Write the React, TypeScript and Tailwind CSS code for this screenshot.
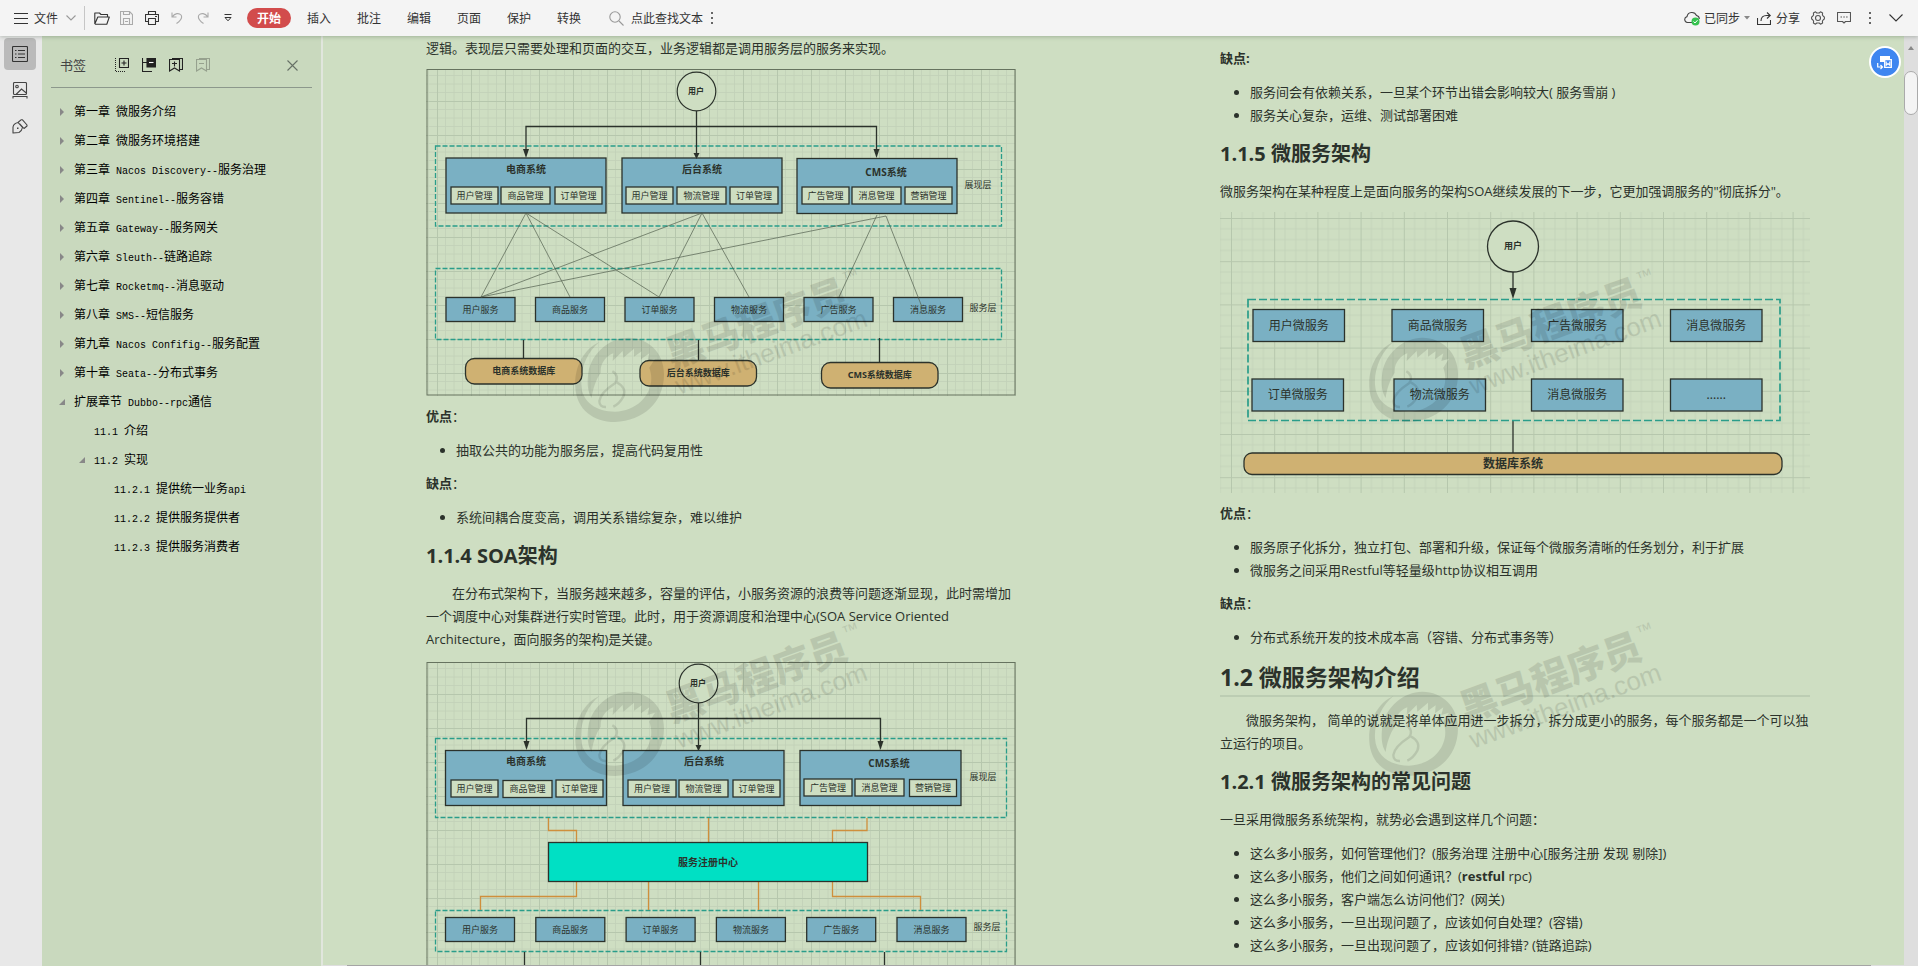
import React, { useState } from "react";
import clsx from "clsx";

const INK = "#2b322b";
const BLUE = "#7ab0c3";
const PAPER = "#cedec2";
const TAN = "#cfb172";
const TEAL = "#2a9d8a";
const ORANGE = "#cf8f3c";

const tabs = ["开始", "插入", "批注", "编辑", "页面", "保护", "转换"];

type Bookmark = { title: string; level: number; state?: "open" | "closed" };

const bookmarks: Bookmark[] = [
  { title: "第一章 微服务介绍", level: 0, state: "closed" },
  { title: "第二章 微服务环境搭建", level: 0, state: "closed" },
  { title: "第三章 Nacos Discovery--服务治理", level: 0, state: "closed" },
  { title: "第四章 Sentinel--服务容错", level: 0, state: "closed" },
  { title: "第五章 Gateway--服务网关", level: 0, state: "closed" },
  { title: "第六章 Sleuth--链路追踪", level: 0, state: "closed" },
  { title: "第七章 Rocketmq--消息驱动", level: 0, state: "closed" },
  { title: "第八章 SMS--短信服务", level: 0, state: "closed" },
  { title: "第九章 Nacos Confifig--服务配置", level: 0, state: "closed" },
  { title: "第十章 Seata--分布式事务", level: 0, state: "closed" },
  { title: "扩展章节 Dubbo--rpc通信", level: 0, state: "open" },
  { title: "11.1 介绍", level: 1 },
  { title: "11.2 实现", level: 1, state: "open" },
  { title: "11.2.1 提供统一业务api", level: 2 },
  { title: "11.2.2 提供服务提供者", level: 2 },
  { title: "11.2.3 提供服务消费者", level: 2 },
];

const indent = ["pl-[17px]", "pl-[37px]", "pl-[57px]"];

/* ---------- small icons ---------- */

function Icon({ w, h, children, className }: { w: number; h: number; children: React.ReactNode; className?: string }) {
  return (
    <svg
      width={w}
      height={h}
      viewBox={`0 0 ${w} ${h}`}
      fill="none"
      stroke="currentColor"
      strokeWidth="1.1"
      className={clsx("shrink-0", className)}
      aria-hidden="true"
    >
      {children}
    </svg>
  );
}

function IconButton({ label, className, children }: { label: string; className?: string; children: React.ReactNode }) {
  return (
    <button type="button" aria-label={label} className={clsx("flex shrink-0 items-center justify-center", className)}>
      {children}
    </button>
  );
}

/* ---------- toolbar ---------- */

function Toolbar() {
  const [active, setActive] = useState("开始");

  return (
    <header className="relative z-20 flex h-9 shrink-0 items-center bg-[#f4f4f4] pl-[14px] pr-[15px] text-xs text-[#333] shadow-[0_1px_4px_rgba(60,80,60,0.3)]">
      <button type="button" className="flex items-center gap-[6px]">
        <Icon w={14} h={11}>
          <path d="M0 .5H14M0 5.5H14M0 10.5H14" />
        </Icon>
        文件
        <Icon w={10} h={6} className="ml-[2px] text-[#999]">
          <path d="M.5 .5L5 5L9.500 .5" />
        </Icon>
      </button>
      <div className="ml-2 h-6 w-px bg-[#c6c6c6]" />

      {/* quick access */}
      <div className="ml-[9px] flex items-center">
        <IconButton label="打开">
          <Icon w={16} h={13}>
            <path d="M.8 12V1H5.500L7 2.500H13.500V5M.8 12L3.800 5H15.300L12.800 12.300H.8" strokeLinejoin="round" />
          </Icon>
        </IconButton>
        <IconButton label="保存" className="ml-[10px] text-[#aaa]">
          <Icon w={13} h={14}>
            <path d="M.5 .5H9.500L12.500 3.500V13.500H.5ZM3.500 .5V3.500H9.500V.5M3.500 13.500V7.500H9.500V13.500M5 10.500H8" />
          </Icon>
        </IconButton>
        <IconButton label="打印" className="ml-3">
          <Icon w={14} h={14}>
            <path d="M3.500 3.500V.5H10.500V3.500M3.500 10.500H.5V3.500H13.500V10.500H10.500M3.500 7.500H10.500V13.500H3.500ZM10 5.500H12" strokeLinejoin="round" />
          </Icon>
        </IconButton>
        <IconButton label="撤销" className="ml-3 text-[#aaa]">
          <Icon w={12} h={12}>
            <path d="M1 .5V5H5.500M1.200 4.800C4 1 8 .8 10 3C12 6 9 9 5.500 11.500" />
          </Icon>
        </IconButton>
        <IconButton label="重做" className="ml-[14px] text-[#aaa]">
          <Icon w={12} h={12}>
            <path d="M11 .5V5H6.500M10.800 4.800C8 1 4 .8 2 3C0 6 3 9 6.500 11.500" />
          </Icon>
        </IconButton>
        <IconButton label="更多" className="ml-[15px]">
          <Icon w={8} h={8}>
            <path d="M.5 .5H7.500M1 3.500H7L4 6.800Z" strokeWidth="1" />
          </Icon>
        </IconButton>
      </div>

      <nav className="ml-[15px] flex items-center gap-[6px]">
        {tabs.map((tab) => (
          <button
            key={tab}
            type="button"
            onClick={() => setActive(tab)}
            className={clsx("h-5 w-11 rounded-full", active === tab && "bg-[#d24c4c] font-bold text-white")}
          >
            {tab}
          </button>
        ))}
      </nav>

      <label className="ml-[18px] flex items-center gap-[7px]">
        <Icon w={15} h={15} className="text-[#999]">
          <circle cx="6" cy="6" r="5.200" />
          <path d="M10 10L14.500 14.500" />
        </Icon>
        <input
          type="text"
          aria-label="查找文本"
          placeholder="点此查找文本"
          className="w-19 bg-transparent outline-none placeholder:text-[#333] placeholder:opacity-100"
        />
      </label>
      <IconButton label="更多选项" className="ml-[3px]">
        <Dots />
      </IconButton>

      <div className="ml-auto flex items-center">
        <button type="button" className="flex items-center gap-1">
          <svg width="16" height="15" viewBox="0 0 16 15" fill="none" aria-hidden="true">
            <path
              d="M8 11.500H3.500A3 3 0 0 1 3 5.600A5 5 0 0 1 12.500 4.500A3.500 3.500 0 0 1 15.300 8"
              stroke="#444"
              strokeWidth="1.100"
            />
            <circle cx="11.500" cy="10.500" r="4" fill="#35c24f" />
            <path d="M9.500 10.500L11 12L13.500 9.200" stroke="#fff" />
          </svg>
          已同步
        </button>
        <Icon w={6} h={4} className="ml-1">
          <path d="M0 0H6L3 3.500Z" fill="#888" stroke="none" />
        </Icon>
        <button type="button" className="ml-[7px] flex items-center gap-[5px]">
          <Icon w={14} h={13}>
            <path d="M.5 6V12.500H13.500V8M4 9C4 5.500 6 3.500 9.500 3.500H13M10 .5L13.200 3.500L10 6.500" />
          </Icon>
          分享
        </button>
        <IconButton label="设置" className="ml-[11px] text-[#555]">
          <Icon w={14} h={14}>
            <path
              d="M4.500 .8L5.800 2H8.200L9.500 .8L11.600 2L11.400 3.900L12.500 5.500L13.400 6V8L12.500 8.500L11.400 10.100L11.600 12L9.500 13.200L8.200 12H5.800L4.500 13.200L2.400 12L2.600 10.100L1.500 8.500L.6 8V6L1.500 5.500L2.600 3.900L2.400 2Z"
              strokeLinejoin="round"
            />
            <circle cx="7" cy="7" r="2.500" />
          </Icon>
        </IconButton>
        <IconButton label="消息" className="ml-3 text-[#555]">
          <Icon w={14} h={12}>
            <path d="M.5 .5H13.500V9.500H8.500L7 11L5.500 9.500H.5Z" strokeLinejoin="round" />
            <path d="M3.500 5H5M6.300 5H7.800M9.100 5H10.600" />
          </Icon>
        </IconButton>
        <IconButton label="菜单" className="ml-[17px]">
          <Dots />
        </IconButton>
        <IconButton label="收起" className="ml-[17px]">
          <Icon w={14} h={8}>
            <path d="M.5 .5L7 7L13.500 .5" />
          </Icon>
        </IconButton>
      </div>
    </header>
  );
}

function Dots() {
  return (
    <Icon w={4} h={12}>
      <path d="M1 0H3V2H1ZM1 5H3V7H1ZM1 10H3V12H1Z" fill="#666" stroke="none" />
    </Icon>
  );
}

/* ---------- left side ---------- */

function Rail() {
  return (
    <div className="flex w-[42px] shrink-0 flex-col gap-1 bg-[#e8e8e8] pl-1 pt-[2px] text-[#444]">
      <IconButton label="书签" className="size-8 rounded-sm bg-[#bababa] text-[#333]">
        <Icon w={16} h={16}>
          <rect x=".5" y=".5" width="15" height="15" rx="1" />
          <path d="M3 4.500H4.500M6 4.500H13M3 8H4.500M6 8H13M3 11.500H4.500M6 11.500H13" />
        </Icon>
      </IconButton>
      <IconButton label="缩略图" className="size-8">
        <Icon w={16} h={17}>
          <rect x="1.500" y=".5" width="13" height="12" rx="1" />
          <circle cx="5" cy="4.500" r="1.300" />
          <path d="M4 12.500L9.500 7L14.300 11M1 16.500V14.500H15V16.500" />
        </Icon>
      </IconButton>
      <IconButton label="签名" className="size-8">
        <Icon w={16} h={15}>
          <path
            d="M1 14V8C1.500 5.500 3.500 4 6 3.500L10.500 8.500C10 11 9 12.500 7 13.500ZM6 3.500L9 .8H10.500L15 6V7L12 9.500L7.500 4.500"
            strokeLinejoin="round"
          />
          <path d="M5 8.500H6.500V10H5Z" fill="currentColor" stroke="none" />
        </Icon>
      </IconButton>
    </div>
  );
}

// Latin runs keep a half-width cell next to the full-width characters
function BookmarkTitle({ text }: { text: string }) {
  return (
    <>
      {text.split(/([\x20-\x7e]+)/).map((part, i) =>
        i % 2 === 1 ? (
          <span key={i} className="font-['Liberation_Mono',monospace] text-[10px]">
            {part}
          </span>
        ) : (
          part
        )
      )}
    </>
  );
}

function Bookmarks() {
  return (
    <aside className="w-[281px] shrink-0 border-r-2 border-[#e1e6dd] bg-[#c9d9be] pl-[9px] pr-[9px]">
      <div className="flex h-[52px] items-center border-b border-[#8c988c] pl-[9px] pr-[14px] pt-[7px]">
        <h2 className="text-[13px] text-[#444]">书签</h2>
        <div className="ml-[29px] flex gap-[13px] text-[#222]">
          <IconButton label="展开全部">
            <Icon w={14} h={14}>
              <path d="M.5 0V14M1 13.500H10" strokeDasharray="1 1" strokeWidth="1" />
              <path d="M4.500 .5H13.500V9.500H4.500ZM9 2.500V7.500M6.500 5H11.500" />
            </Icon>
          </IconButton>
          <IconButton label="收起全部">
            <Icon w={14} h={14}>
              <path d="M.5 0V13.500H10M.5 4.500H5" />
              <path d="M5 .5H13.500V9H5Z" fill="currentColor" />
              <path d="M7 4.500H11.500" stroke="#fff" />
            </Icon>
          </IconButton>
          <IconButton label="添加书签">
            <Icon w={14} h={14}>
              <path d="M.5 1.500H10.500V13L5.500 10L.5 13ZM3 .5H13.500V11.500H10.500M5.500 3.500V8.500M3 5.500H8" />
            </Icon>
          </IconButton>
          <IconButton label="删除书签" className="opacity-30">
            <Icon w={14} h={14}>
              <path d="M.5 1.500H10.500V13L5.500 10L.5 13ZM3 .5H13.500V11.500H10.500M3 5.500H8" />
            </Icon>
          </IconButton>
        </div>
        <IconButton label="关闭" className="ml-auto text-[#667066]">
          <Icon w={11} h={11}>
            <path d="M.5 .5L10.500 10.500M10.500 .5L.5 10.500" />
          </Icon>
        </IconButton>
      </div>

      <ul className="mt-[9px] text-xs text-black">
        {bookmarks.map((item) => (
          <li key={item.title}>
            <a href="#" className={clsx("relative flex h-[29px] items-center whitespace-pre", indent[item.level])}>
              <span className="-ml-4 flex w-[22px] shrink-0 justify-center pr-[2px]">
                {item.state === "closed" && (
                  <Icon w={4} h={8}>
                    <path d="M0 0L4 4L0 8Z" fill="#888" stroke="none" />
                  </Icon>
                )}
                {item.state === "open" && (
                  <Icon w={6} h={6}>
                    <path d="M6 0V6H0Z" fill="#888" stroke="none" />
                  </Icon>
                )}
              </span>
              <span>
                <BookmarkTitle text={item.title} />
              </span>
            </a>
          </li>
        ))}
      </ul>
    </aside>
  );
}

/* ---------- diagram parts ---------- */

type BoxProps = {
  x: number;
  y: number;
  w: number;
  h: number;
  label?: string;
  size?: number;
  fill?: string;
  rx?: number;
  bold?: boolean;
};

function Box({ x, y, w, h, label, size = 9, fill = BLUE, rx = 0, bold }: BoxProps) {
  return (
    <g>
      <rect x={x} y={y} width={w} height={h} rx={rx} fill={fill} stroke={INK} strokeWidth="1.300" />
      {label && (
        <Label x={x + w / 2} y={y + h / 2} size={size} bold={bold}>
          {label}
        </Label>
      )}
    </g>
  );
}

function Label({ x, y, size = 9, bold, children }: { x: number; y: number; size?: number; bold?: boolean; children: string }) {
  return (
    <text x={x} y={y + size * 0.36} fontSize={size} fontWeight={bold ? 700 : 400} textAnchor="middle" fill={INK}>
      {children}
    </text>
  );
}

function Grid({ id, step, x, y, w, h }: { id: string; step: number; x: number; y: number; w: number; h: number }) {
  const q = step / 4;
  return (
    <>
      <defs>
        <pattern id={id} x={x} y={y} width={step} height={step} patternUnits="userSpaceOnUse">
          <path
            d={`M${q} 0V${step}M${q * 2} 0V${step}M${q * 3} 0V${step}M0 ${q}H${step}M0 ${q * 2}H${step}M0 ${q * 3}H${step}`}
            stroke="#c1d1b7"
            strokeWidth="0.800"
          />
          <path d={`M0.500 0V${step}M0 0.500H${step}`} stroke="#b6c7ad" />
        </pattern>
      </defs>
      <rect width={w} height={h} fill={`url(#${id})`} />
    </>
  );
}

function Arrow({ x, y, w = 6, h = 9 }: { x: number; y: number; w?: number; h?: number }) {
  return <path d={`M${x - w / 2} ${y - h}H${x + w / 2}L${x} ${y}Z`} fill={INK} />;
}

const dash = { fill: "none", stroke: TEAL, strokeWidth: 1.3, strokeDasharray: "5 2" };

const figure = "block h-auto w-full font-['Noto_Sans','Noto_Sans_CJK_SC',sans-serif]";

function DistributedFigure() {
  const links = [
    [100, 144, 55, 228],
    [100, 144, 144, 228],
    [100, 144, 233, 228],
    [276, 144, 55, 228],
    [276, 144, 233, 228],
    [276, 144, 323, 228],
    [460, 147, 55, 228],
    [451, 146, 413, 228],
    [460, 147, 496, 238],
  ];
  const modules: [number, number, number, string][] = [
    [25, 118, 47, "用户管理"],
    [75, 118, 49, "商品管理"],
    [129, 118, 47, "订单管理"],
    [200, 118, 47, "用户管理"],
    [251, 118, 49, "物流管理"],
    [304, 118, 48, "订单管理"],
    [376, 118, 47, "广告管理"],
    [426, 118, 49, "消息管理"],
    [479, 118, 47, "营销管理"],
  ];
  const services = ["用户服务", "商品服务", "订单服务", "物流服务", "广告服务", "消息服务"];

  return (
    <svg viewBox="0 0 590 327" className={clsx(figure, "mt-[9px]")} role="img" aria-label="分布式架构">
      <Grid id="grid-a" step={34} x={11} y={32} w={590} h={327} />
      <rect x="1" y=".5" width="588" height="325.500" fill="none" stroke="#66735f" />
      <circle cx="270.500" cy="22.500" r="19.300" fill={PAPER} stroke={INK} strokeWidth="1.200" />
      <Label x={270} y={22} size={8} bold>用户</Label>

      <g>
        <rect x="9.500" y="77" width="566" height="80" {...dash} />
        <rect x="9.500" y="199.500" width="566" height="71" {...dash} />
      </g>

      <Box x={20} y={89} w={160} h={55} />
      <Box x={196} y={89} w={160} h={55} />
      <Box x={371} y={89.500} w={160} h={55} />
      <Label x={100} y={100} size={10} bold>电商系统</Label>
      <Label x={276} y={100} size={10} bold>后台系统</Label>
      <Label x={460} y={103} size={10} bold>CMS系统</Label>
      {modules.map(([x, y, w, label]) => (
        <Box key={x} x={x} y={y} w={w} h={17} label={label} fill={PAPER} />
      ))}
      <Label x={552} y={116}>展现层</Label>

      <path d="M270.500 42V88M100 85V57.500H450.500V85" fill="none" stroke={INK} strokeWidth="1.300" />
      <Arrow x={100} y={89} />
      <Arrow x={270.500} y={90} h={6} />
      <Arrow x={450.500} y={89} />

      {services.map((name, i) => (
        <Box key={name} x={20 + i * 89.500} y={228.500} w={69} h={24} label={name} />
      ))}
      <Label x={557} y={239}>服务层</Label>
      {links.map(([x1, y1, x2, y2], i) => (
        <line key={i} x1={x1} y1={y1} x2={x2} y2={y2} stroke="#53604f" strokeWidth="0.700" />
      ))}

      <path d="M97.500 271V290M272.500 271V291M453.500 269V294" stroke={INK} strokeWidth="1.300" />
      <Box x={39.500} y={289.500} w={116.500} h={25.500} rx={9} fill={TAN} label="电商系统数据库" bold />
      <Box x={214} y={291.500} w={116.500} h={25.500} rx={9} fill={TAN} label="后台系统数据库" bold />
      <Box x={395.500} y={293.500} w={116.500} h={25.500} rx={9} fill={TAN} label="CMS系统数据库" bold />
    </svg>
  );
}

function SoaFigure() {
  const modules: [number, number, number, string][] = [
    [25, 118, 47, "用户管理"],
    [77, 118.5, 49, "商品管理"],
    [130, 118, 47, "订单管理"],
    [202, 118, 48, "用户管理"],
    [253, 118, 49, "物流管理"],
    [307, 118, 47, "订单管理"],
    [378, 117, 48, "广告管理"],
    [429, 117, 49, "消息管理"],
    [483.5, 117.5, 47, "营销管理"],
  ];
  const services = ["用户服务", "商品服务", "订单服务", "物流服务", "广告服务", "消息服务"];

  return (
    <svg viewBox="0 0 590 340" className={clsx(figure, "mt-[11px]")} role="img" aria-label="SOA架构">
      <Grid id="grid-b" step={34} x={11} y={32} w={590} h={340} />
      <rect x="1" y=".5" width="588" height="339" fill="none" stroke="#66735f" />
      <circle cx="272.500" cy="21.500" r="19.300" fill={PAPER} stroke={INK} strokeWidth="1.200" />
      <Label x={272} y={21} size={8} bold>用户</Label>

      <g>
        <rect x="9.500" y="76.500" width="571" height="79" {...dash} />
        <rect x="9.500" y="248.500" width="571" height="41" {...dash} />
      </g>

      <Box x={19.500} y={88.500} w={161} h={55} />
      <Box x={197} y={88.500} w={161} h={55} />
      <Box x={374} y={88.500} w={161} h={55} />
      <Label x={100} y={99} size={10} bold>电商系统</Label>
      <Label x={278} y={99} size={10} bold>后台系统</Label>
      <Label x={463} y={101} size={10} bold>CMS系统</Label>
      {modules.map(([x, y, w, label]) => (
        <Box key={x} x={x} y={y} w={w} h={17} label={label} fill={PAPER} />
      ))}
      <Label x={557} y={115}>展现层</Label>

      <path d="M272.500 41V88M100.500 84V56.500H454.500V84" fill="none" stroke={INK} strokeWidth="1.300" />
      <Arrow x={100.500} y={88} />
      <Arrow x={272.500} y={89} h={6} />
      <Arrow x={454.500} y={88} />

      <g fill="none" stroke={ORANGE} strokeWidth="1.300">
        <path d="M122.500 156V168.500H150.500V180M282.500 156V180M441 156V168.500H406.500V180" />
        <path d="M150.500 220V234.500H54.500V248M222.500 220V248M332.500 220V248M406.500 220V234.500H494.500V248" />
      </g>
      <Box x={122.500} y={180.500} w={319} h={39} fill="#00e0c4" label="服务注册中心" size={10} bold />

      {services.map((name, i) => (
        <Box key={name} x={19.500 + i * 90.300} y={255.500} w={69} h={24} label={name} />
      ))}
      <Label x={561} y={265}>服务层</Label>
      <path d="M98.500 290V340M274.500 290V340M458.500 290V340" stroke={INK} strokeWidth="1.300" />
    </svg>
  );
}

function MicroserviceFigure() {
  const nodes: [number, number, string][] = [
    [33, 97.5, "用户微服务"],
    [172, 97.5, "商品微服务"],
    [311.5, 97.5, "广告微服务"],
    [450.5, 97.5, "消息微服务"],
    [32, 167, "订单微服务"],
    [174, 167, "物流微服务"],
    [311.5, 167, "消息微服务"],
    [450.5, 167, "......"],
  ];

  return (
    <svg viewBox="0 0 590 281" className={clsx(figure, "mt-[9px]")} role="img" aria-label="微服务架构">
      <Grid id="grid-c" step={43.200} x={11} y={6} w={590} h={281} />
      <circle cx="293" cy="34.500" r="25.500" fill={PAPER} stroke={INK} strokeWidth="1.300" />
      <Label x={293} y={34} bold>用户</Label>
      <path d="M293 60V80M293 208V241" stroke={INK} strokeWidth="1.300" />
      <Arrow x={293} y={87} w={7} h={11} />
      <rect x="28" y="87.500" width="532" height="121" {...dash} strokeWidth="1.700" strokeDasharray="8 3" />
      {nodes.map(([x, y, label]) => (
        <Box key={x + "-" + y} x={x} y={y} w={91.500} h={32} label={label} size={12} />
      ))}
      <Box x={24} y={241} w={538} h={21.500} rx={8} fill={TAN} label="数据库系统" size={12} bold />
    </svg>
  );
}

function Watermark({ className }: { className: string }) {
  return (
    <svg
      width="310"
      height="185"
      viewBox="0 0 310 185"
      className={clsx("pointer-events-none absolute left-36 opacity-10", className)}
      aria-hidden="true"
    >
      <g transform="translate(-10 -5) scale(0.3333)">
        <path d="M118 288C70 310 42 365 46 425C50 490 100 528 165 528C250 525 312 470 312 385C312 320 265 275 205 275C150 275 95 320 85 380C80 420 85 440 95 456C98 430 108 400 122 380C120 350 140 330 160 322L158 345L188 315L190 335L222 308L222 332L245 316L243 340L268 322L262 345L285 338L268 365C292 430 240 495 165 497C110 497 66 470 63 415C60 365 85 315 118 288Z" />
        <path
          d="M157 376Q180 390 165 412Q122 440 118 465Q118 484 138 483M168 408Q202 425 190 452Q178 474 160 482"
          fill="none"
          stroke="#000"
          strokeWidth="7"
        />
      </g>
      <g transform="rotate(-20 104 118)">
        <text x="102" y="117" fontSize="38" fontWeight="900" className="font-['Noto_Sans_CJK_SC',sans-serif]">
          黑马程序员
        </text>
        <text x="100" y="144" fontSize="26" className="font-['Liberation_Sans',sans-serif]">
          www.itheima.com
        </text>
        <text x="293" y="97" fontSize="17" className="font-['Liberation_Sans',sans-serif]">
          ™
        </text>
      </g>
    </svg>
  );
}

/* ---------- document ---------- */

const list = "mb-[10px] mt-[11px] list-disc pl-[30px]";
const h3 = "mb-3 mt-[13px] text-xl font-bold leading-7";

function LeftPage() {
  return (
    <article className="relative pt-px">
      <p>逻辑。表现层只需要处理和页面的交互，业务逻辑都是调用服务层的服务来实现。</p>
      <DistributedFigure />
      <p className="mt-[9px]"><b>优点</b>：</p>
      <ul className={list}>
        <li>抽取公共的功能为服务层，提高代码复用性</li>
      </ul>
      <p><b>缺点</b>：</p>
      <ul className={list}>
        <li>系统间耦合度变高，调用关系错综复杂，难以维护</li>
      </ul>
      <h3 className={h3}>1.1.4 SOA架构</h3>
      <p className="indent-[26px]">
        在分布式架构下，当服务越来越多，容量的评估，小服务资源的浪费等问题逐渐显现，此时需增加一个调度中心对集群进行实时管理。此时，用于资源调度和治理中心(SOA Service Oriented Architecture，面向服务的架构)是关键。
      </p>
      <SoaFigure />
      <Watermark className="top-[215px]" />
      <Watermark className="top-[569px]" />
    </article>
  );
}

function RightPage() {
  return (
    <article className="relative pt-[11px]">
      <p><b>缺点:</b></p>
      <ul className={list}>
        <li>服务间会有依赖关系，一旦某个环节出错会影响较大( 服务雪崩 )</li>
        <li>服务关心复杂，运维、测试部署困难</li>
      </ul>
      <h3 className={h3}>1.1.5 微服务架构</h3>
      <p>微服务架构在某种程度上是面向服务的架构SOA继续发展的下一步，它更加强调服务的"彻底拆分"。</p>
      <MicroserviceFigure />
      <p className="mt-[9px]"><b>优点</b>：</p>
      <ul className={list}>
        <li>服务原子化拆分，独立打包、部署和升级，保证每个微服务清晰的任务划分，利于扩展</li>
        <li>微服务之间采用Restful等轻量级http协议相互调用</li>
      </ul>
      <p><b>缺点</b>：</p>
      <ul className={list}>
        <li>分布式系统开发的技术成本高（容错、分布式事务等）</li>
      </ul>
      <h2 className="mb-3 mt-3 border-b-2 border-[#bccdb3] pb-[2px] text-[23px] font-bold leading-8">1.2 微服务架构介绍</h2>
      <p className="indent-[26px]">
        微服务架构， 简单的说就是将单体应用进一步拆分，拆分成更小的服务，每个服务都是一个可以独立运行的项目。
      </p>
      <h3 className={h3}>1.2.1 微服务架构的常见问题</h3>
      <p>一旦采用微服务系统架构，就势必会遇到这样几个问题：</p>
      <ul className={list}>
        <li>这么多小服务，如何管理他们？(服务治理 注册中心[服务注册 发现 剔除])</li>
        <li>这么多小服务，他们之间如何通讯？(<b>restful</b> rpc)</li>
        <li>这么多小服务，客户端怎么访问他们？(网关)</li>
        <li>这么多小服务，一旦出现问题了，应该如何自处理？(容错)</li>
        <li>这么多小服务，一旦出现问题了，应该如何排错? (链路追踪)</li>
      </ul>
      <Watermark className="top-[215px]" />
      <Watermark className="top-[569px]" />
    </article>
  );
}

export default function App() {
  return (
    <div lang="zh-CN" className="flex h-screen flex-col overflow-hidden font-['Noto_Sans_CJK_SC',sans-serif]">
      <Toolbar />
      <div className="flex min-h-0 flex-1">
        <Rail />
        <Bookmarks />

        <main className="relative flex min-w-0 flex-1 flex-col bg-[#cedec2]">
          <div className="grid min-h-0 flex-1 grid-cols-2 gap-[204px] overflow-hidden pl-[103px] pr-[94px] font-['Open_Sans','Noto_Sans_CJK_SC',sans-serif] text-[13px] leading-[23px] text-[#2b322b]">
            <LeftPage />
            <RightPage />
          </div>
          {/* horizontal scroll bar */}
          <div className="h-px shrink-0 bg-[#dedede] pl-6 pr-[33px]">
            <div className="h-px bg-[#a5a5a5]" />
          </div>

          <button
            type="button"
            aria-label="导出为 Word"
            className="absolute right-[3px] top-[10px] flex size-8 items-center justify-center rounded-full border-2 border-white bg-[#3f86f0]"
          >
            <svg width="16" height="15" viewBox="0 0 16 15" fill="none" aria-hidden="true">
              <path d="M3 1H13V4H8V7H3Z" fill="#fff" />
              <path d="M7.700 4.700H14.300V12.300H7.700Z" fill="#3f86f0" stroke="#fff" strokeWidth="1.300" />
              <path d="M9.200 6.500V10.200L11 8.500L12.800 10.200V6.500" stroke="#fff" strokeWidth="1.200" />
              <path d="M.7 8V12H5M3.500 10L5.500 12L3.500 14" stroke="#fff" strokeWidth="1.200" />
            </svg>
          </button>
        </main>

        {/* vertical scroll bar */}
        <div className="flex w-[14px] shrink-0 flex-col items-center bg-[#dedede] pt-[10px]">
          <Icon w={6} h={4}>
            <path d="M0 4L3 0L6 4Z" fill="#888" stroke="none" />
          </Icon>
          <div className="mt-[21px] h-11 w-full rounded-full border border-[#aaa] bg-[#f4f4f4]" />
        </div>
      </div>
    </div>
  );
}
